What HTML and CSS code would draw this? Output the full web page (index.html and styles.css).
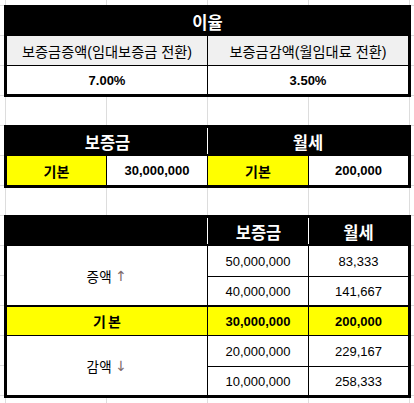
FILE: index.html
```html
<!DOCTYPE html>
<html lang="ko">
<head>
<meta charset="utf-8">
<title>이율</title>
<link rel="stylesheet" href="styles.css">
</head>
<body>
<div class="sheet">
  <div class="tbl t1">
    <div class="c hd span4">이율</div>
    <div class="c sub span2 br bb">보증금증액(임대보증금 전환)</div>
    <div class="c sub span2 bb">보증금감액(월임대료 전환)</div>
    <div class="c span2 br b">7.00%</div>
    <div class="c span2 b">3.50%</div>
  </div>
  <div class="tbl t2">
    <div class="c hd span2 sep">보증금</div>
    <div class="c hd span2">월세</div>
    <div class="c yel br b ko">기본</div>
    <div class="c br b">30,000,000</div>
    <div class="c yel br b ko">기본</div>
    <div class="c b">200,000</div>
  </div>
  <div class="tbl t3">
    <div class="c hd span2 sep"></div>
    <div class="c hd sep">보증금</div>
    <div class="c hd">월세</div>
    <div class="c lbl span2 rows2 br bb2">증액 <span class="arr">↑</span></div>
    <div class="c br bb">50,000,000</div>
    <div class="c bb">83,333</div>
    <div class="c br bb2">40,000,000</div>
    <div class="c bb2">141,667</div>
    <div class="c yel span2 br bb b ko wide">기본</div>
    <div class="c yel br bb b">30,000,000</div>
    <div class="c yel bb b">200,000</div>
    <div class="c lbl span2 rows2 br">감액 <span class="arr">↓</span></div>
    <div class="c br bb">20,000,000</div>
    <div class="c bb">229,167</div>
    <div class="c br">10,000,000</div>
    <div class="c">258,333</div>
  </div>
</div>
</body>
</html>
```

FILE: styles.css
```css
html, body {
  margin: 0;
  padding: 0;
  background: #fff;
}

.sheet {
  width: 414px;
  height: 403px;
  box-sizing: border-box;
  padding: 5px 0 0 4px;
  overflow: hidden;
  display: flex;
  flex-direction: column;
  align-items: flex-start;
  background-color: #fff;
  background-image:
    repeating-linear-gradient(90deg, transparent 0 5px, #dddddd 5px 6px, transparent 6px 101px),
    repeating-linear-gradient(180deg, transparent 0 5px, #dddddd 5px 6px, transparent 6px 30px);
}

.tbl {
  display: grid;
  grid-template-columns: 100px 101px 101px 99px;
  border: 3px solid #000;
  background: #fff;
}

.t1 { grid-template-rows: 28px 30px 28px; }
.t2 { grid-template-rows: 28px 29px; margin-top: 28px; }
.t3 { grid-template-rows: 28px 31px 30px 29px 31px 28px; margin-top: 27px; }

.c {
  box-sizing: border-box;
  display: flex;
  align-items: center;
  justify-content: center;
  font-family: "Liberation Sans", "Noto Sans CJK KR", sans-serif;
  font-size: 13px;
  color: #000;
  background: #fff;
  white-space: nowrap;
}

.span2 { grid-column: span 2; }
.span4 { grid-column: span 4; }
.rows2 { grid-row: span 2; }

.br { border-right: 1px solid #000; }
.bb { border-bottom: 1px solid #000; }
.bb2 { border-bottom: 2px solid #000; }
.b { font-weight: bold; }

.hd {
  background: #000;
  color: #fff;
  font-weight: bold;
  font-size: 16.5px;
}

.sep {
  background: linear-gradient(#fff, #fff) no-repeat right top / 1px calc(100% - 2px), #000;
}

.sub {
  background: #f0f0f0;
  font-size: 14.2px;
}

.yel { background: #ffff00; }

.ko { font-size: 14px; }
.wide { letter-spacing: 2px; text-indent: 2px; }

.lbl { font-size: 13.5px; letter-spacing: 0.5px; }
.arr {
  font-family: "DejaVu Sans", sans-serif;
  font-weight: normal;
  color: #7d6a6a;
  margin-left: 3px;
  font-size: 14px;
}
```
